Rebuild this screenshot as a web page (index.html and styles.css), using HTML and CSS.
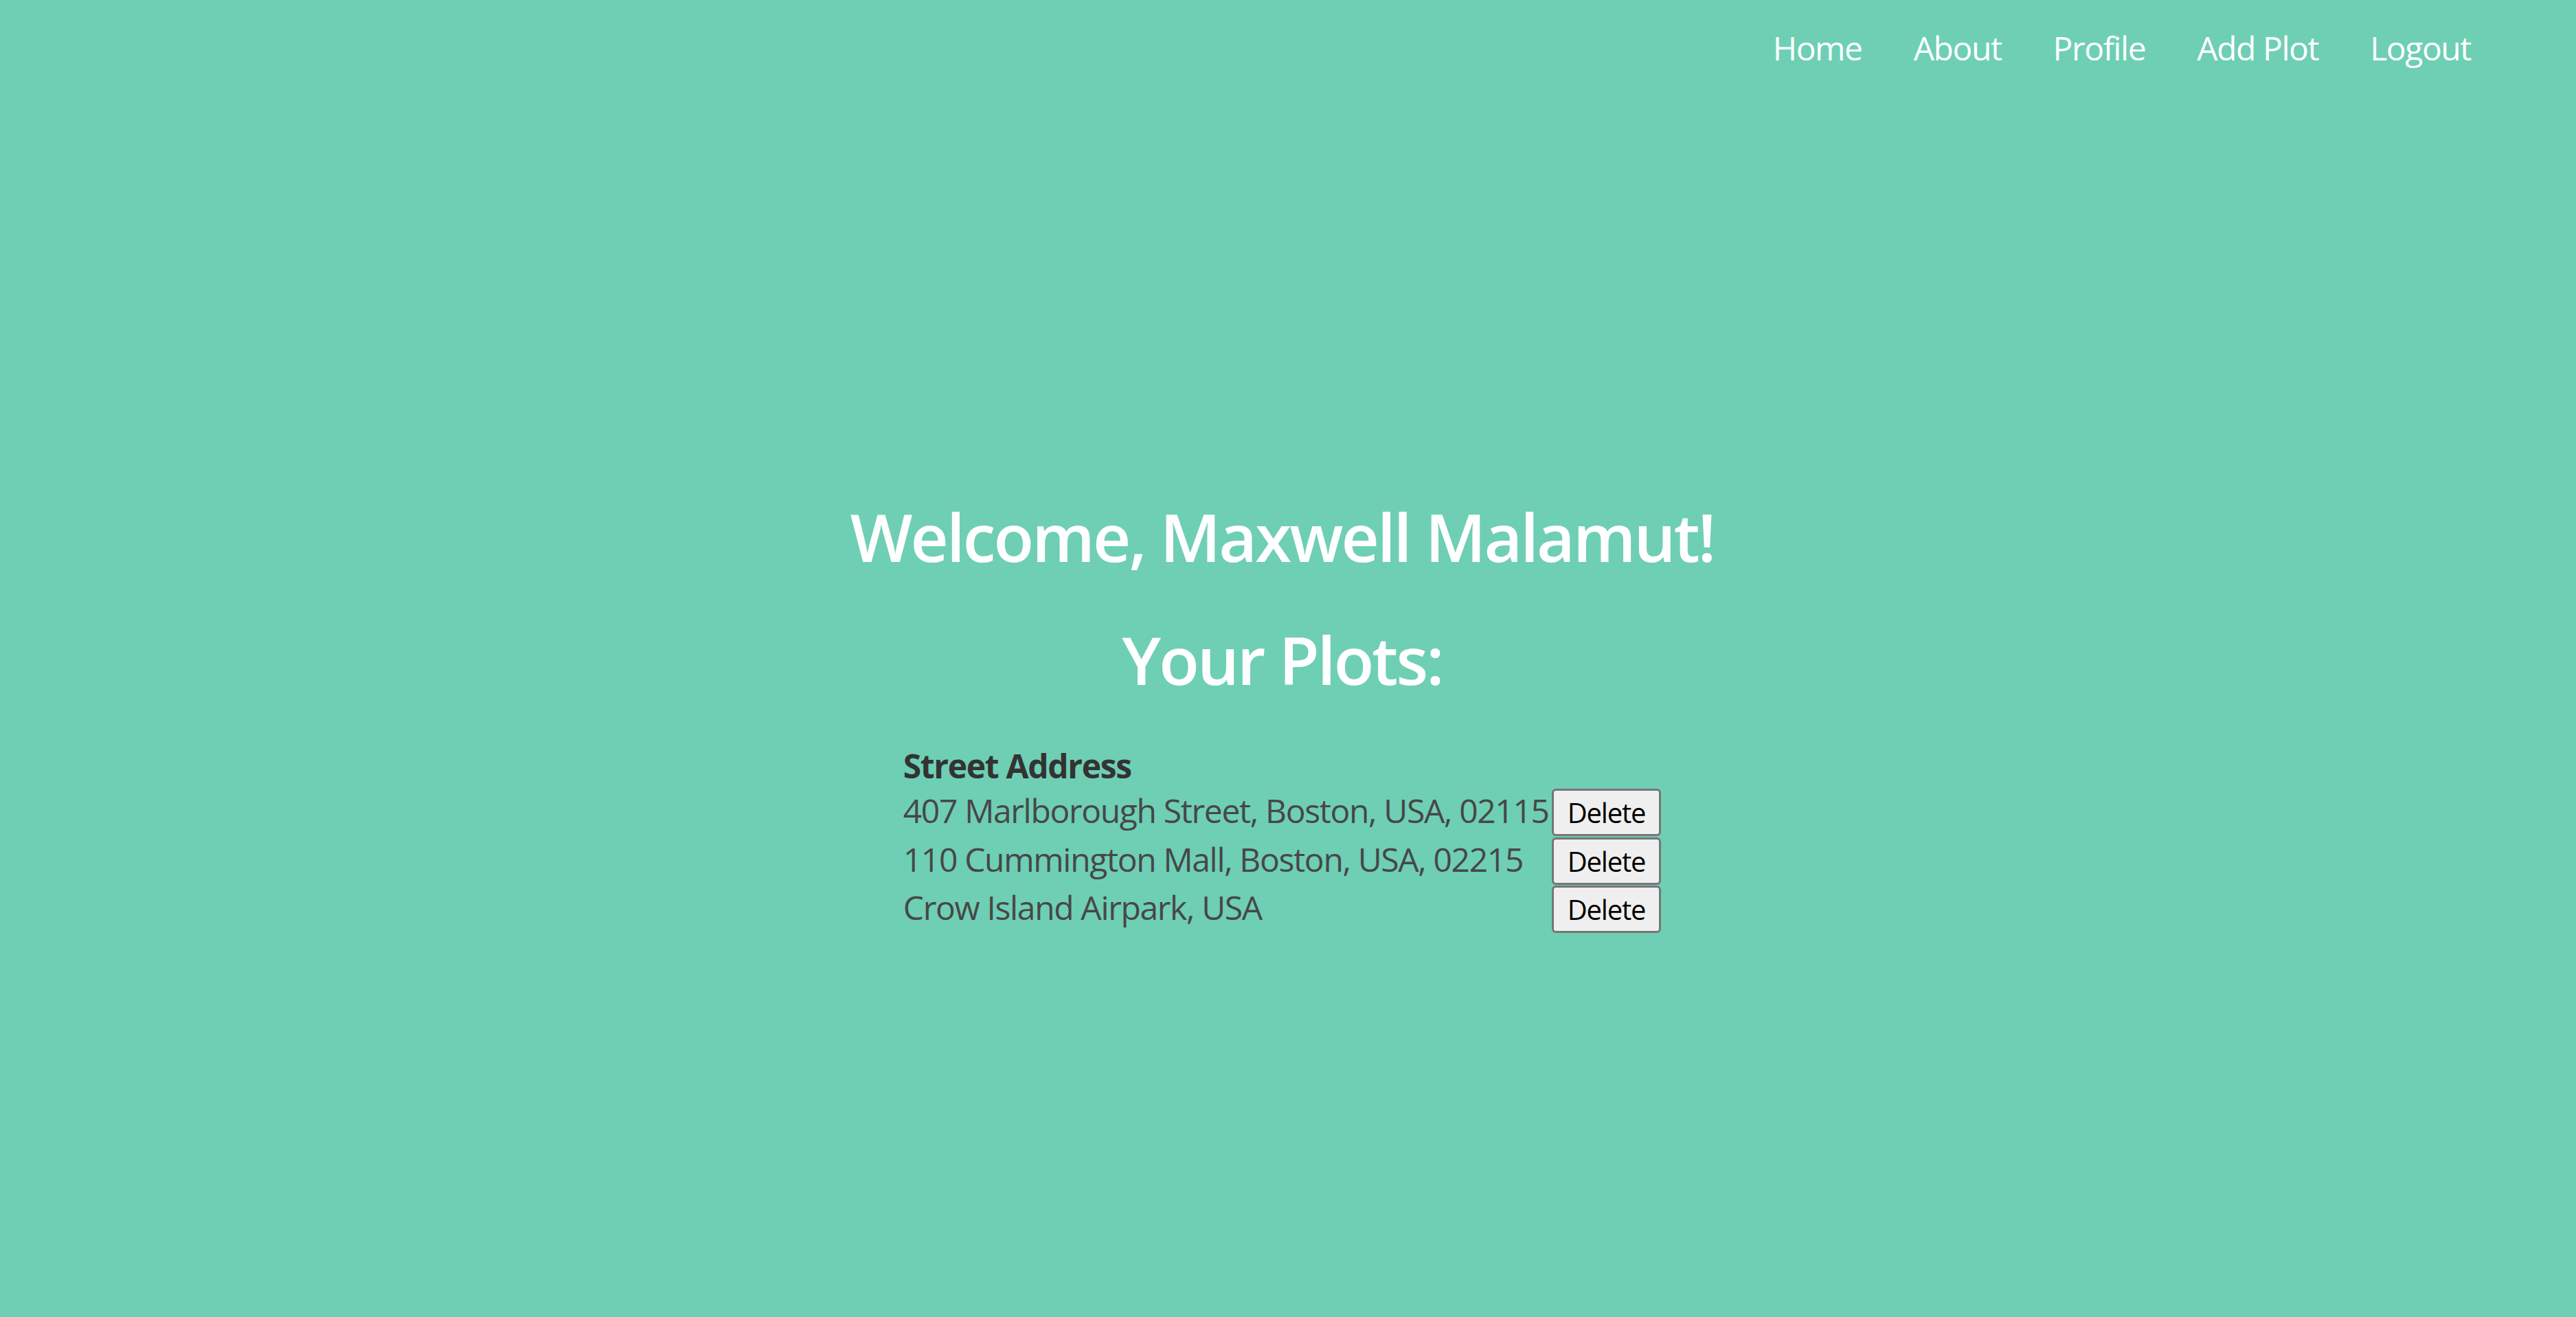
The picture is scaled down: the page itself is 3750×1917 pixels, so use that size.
FILE: index.html
```html
<!DOCTYPE html>
<html lang="en">
<head>
<meta charset="utf-8">
<title>Your Plots</title>
<link rel="stylesheet" href="styles.css">
</head>
<body>
<div class="page">
  <nav class="nav">
    <a class="nav-link" href="#">Home</a>
    <a class="nav-link" href="#">About</a>
    <a class="nav-link" href="#">Profile</a>
    <a class="nav-link" href="#">Add Plot</a>
    <a class="nav-link" href="#">Logout</a>
  </nav>
  <main class="main">
    <h1 class="title">Welcome, Maxwell Malamut!</h1>
    <h2 class="subtitle">Your Plots:</h2>
    <div class="plots">
      <div class="plots-head">Street Address</div>
      <div class="plots-head"></div>
      <div class="plot-addr">407 Marlborough Street, Boston, USA, 02115</div>
      <div class="plot-act"><button class="btn">Delete</button></div>
      <div class="plot-addr">110 Cummington Mall, Boston, USA, 02215</div>
      <div class="plot-act"><button class="btn">Delete</button></div>
      <div class="plot-addr">Crow Island Airpark, USA</div>
      <div class="plot-act"><button class="btn">Delete</button></div>
    </div>
  </main>
</div>
</body>
</html>
```
FILE: styles.css
```css
html, body {
  margin: 0;
  padding: 0;
}
body {
  background: #6ecfb4;
  font-family: "Segoe UI", "Open Sans", "Noto Sans", sans-serif;
  min-height: 1917px;
}
.page {
  width: calc(100% - 17px);
}
.nav {
  display: flex;
  justify-content: flex-end;
  gap: 75px;
  padding: 38px 136px 0 0;
}
.nav-link {
  color: #ffffff;
  text-decoration: none;
  font-size: 48px;
  line-height: 64px;
  letter-spacing: -0.03em;
}
.main {
  display: flex;
  flex-direction: column;
  align-items: center;
  padding-top: 615px;
}
.title, .subtitle {
  margin: 0;
  color: #ffffff;
  font-size: 96px;
  line-height: 128px;
  font-weight: 600;
  letter-spacing: -0.03em;
}
.subtitle {
  margin-top: 51px;
}
.plots {
  margin-top: 59px;
  display: grid;
  grid-template-columns: auto auto;
  grid-template-rows: 65px 70.5px 70.5px 70.5px;
  column-gap: 4px;
  align-items: baseline;
  font-size: 48px;
  line-height: 64px;
  letter-spacing: -0.028em;
}
.plots-head {
  font-weight: 700;
  color: #333333;
}
.plot-addr {
  color: #474747;
}
.btn {
  box-sizing: border-box;
  height: 69px;
  padding: 0 20px;
  font-family: "Segoe UI", "Open Sans", "Noto Sans", sans-serif;
  font-size: 40px;
  letter-spacing: -0.03em;
  color: #000000;
  background: #efefef;
  border: 3px solid #767676;
  border-radius: 6px;
}
```
